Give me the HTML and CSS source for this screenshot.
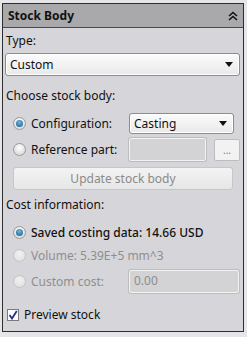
FILE: index.html
```html
<!DOCTYPE html>
<html lang="en">

<head>
    <meta charset="UTF-8">
    <title>Stock Body</title>
    <link rel="stylesheet" href="styles.css">
</head>

<body>
    <div class="panel">
        <div class="header">
            <span class="title">Stock Body</span>
            <svg class="collapse" width="10" height="10" viewBox="0 0 10 10">
                <path d="M1 5 L5 1.5 L9 5 M1 9 L5 5.5 L9 9" fill="none" stroke="#111" stroke-width="1.6"/>
            </svg>
        </div>

        <div class="content">
            <div class="label type-label">Type:</div>
            <div class="select wide">
                <span>Custom</span>
                <span class="arrow"></span>
            </div>

            <div class="label section-label">Choose stock body:</div>

            <div class="row first">
                <span class="radio checked"></span>
                <span class="row-text">Configuration:</span>
                <div class="select small">
                    <span>Casting</span>
                    <span class="arrow"></span>
                </div>
            </div>

            <div class="row">
                <span class="radio"></span>
                <span class="row-text">Reference part:</span>
                <div class="textbox ref"></div>
                <div class="browse">...</div>
            </div>

            <div class="update">Update stock body</div>

            <div class="label cost-label">Cost information:</div>

            <div class="row plain saved">
                <span class="radio checked"></span>
                <span class="row-text">Saved costing data: 14.66 USD</span>
            </div>

            <div class="row plain disabled">
                <span class="radio"></span>
                <span class="row-text">Volume: 5.39E+5 mm^3</span>
            </div>

            <div class="row disabled custom">
                <span class="radio"></span>
                <span class="row-text">Custom cost:</span>
                <div class="textbox cost">0.00</div>
            </div>

            <div class="preview">
                <span class="checkbox">
                    <svg width="10" height="10" viewBox="0 0 10 10">
                        <path d="M1.5 5 L4 8.5 L8.8 1" fill="none" stroke="#1f2f9a" stroke-width="1.8"/>
                    </svg>
                </span>
                <span>Preview stock</span>
            </div>
        </div>
    </div>
</body>

</html>
```

FILE: styles.css
```css
body {
    margin: 0;
    background-color: #e6e6e8;
    font-family: "Noto Sans", "Open Sans", sans-serif;
    font-size: 12px;
    color: #111111;
}

.panel {
    margin: 3px 3px 0 2px;
    height: 329px;
    border: 1px solid #2e2e2e;
    background-color: #d6d6da;
    box-sizing: border-box;
}

.header {
    height: 23px;
    background-color: #a9a9ab;
    border-bottom: 1px solid #4a4a4a;
    display: flex;
    align-items: center;
    justify-content: space-between;
    padding: 0 5px 0 5px;
}

.title {
    font-weight: bold;
    font-size: 12px;
}

.content {
    padding: 0 3px 0 2px;
}

.label {
    height: 16px;
    line-height: 16px;
    padding-left: 1px;
}

.type-label {
    margin-top: 5px;
}

.select {
    height: 23px;
    box-sizing: border-box;
    border: 1px solid #8c8c8c;
    border-radius: 3px;
    background: linear-gradient(#fbfbfb, #e9e9ea);
    display: flex;
    align-items: center;
    justify-content: space-between;
    padding: 0 6px 0 4px;
    box-shadow: inset 0 0 0 1px #ffffff;
}

.wide {
    margin-top: 4px;
}

.arrow {
    width: 0;
    height: 0;
    border-left: 4px solid transparent;
    border-right: 4px solid transparent;
    border-top: 5px solid #111111;
}

.section-label {
    margin-top: 12px;
}

.row {
    display: flex;
    align-items: center;
    padding-left: 8px;
    height: 23px;
    margin-top: 4px;
}

.row.first {
    margin-top: 9px;
    height: 21px;
}

.radio {
    width: 13px;
    height: 13px;
    border-radius: 50%;
    box-sizing: border-box;
    border: 1px solid #9a9a9a;
    background: radial-gradient(circle at 50% 35%, #ffffff, #d0d0d0);
    flex-shrink: 0;
    position: relative;
}

.radio.checked::after {
    content: "";
    position: absolute;
    left: 2px;
    top: 2px;
    width: 7px;
    height: 7px;
    border-radius: 50%;
    background: radial-gradient(circle at 50% 35%, #6fb6e0, #115a88);
}

.row-text {
    margin-left: 5px;
    width: 98px;
    white-space: nowrap;
}

.small {
    width: 105px;
    height: 21px;
}

.textbox {
    height: 23px;
    box-sizing: border-box;
    border: 1px solid #f2f2f2;
    border-radius: 2px;
    background-color: #d3d3d5;
    box-shadow: 0 0 0 1px #bdbdbd;
}

.ref {
    width: 77px;
}

.browse {
    margin-left: 8px;
    width: 26px;
    height: 22px;
    box-sizing: border-box;
    border: 1px solid #bdbdbd;
    border-radius: 2px;
    background-color: #f2f2f3;
    color: #777777;
    font-size: 10px;
    text-align: center;
    line-height: 20px;
}

.update {
    margin: 6px 7px 0 8px;
    height: 23px;
    box-sizing: border-box;
    border: 1px solid #c6c6c6;
    border-radius: 3px;
    background: linear-gradient(#f3f3f4, #e6e6e7);
    color: #8a8a8a;
    text-align: center;
    line-height: 21px;
}

.cost-label {
    margin-top: 7px;
}

.row.plain {
    height: 16px;
}

.row.saved {
    margin-top: 11px;
}

.row.saved .row-text {
    width: auto;
    font-weight: 500;
}

.row.plain.disabled {
    margin-top: 7px;
}

.disabled .radio {
    border-color: #c4c4c4;
    background: radial-gradient(circle at 50% 35%, #f2f2f2, #dcdcdc);
}

.disabled .row-text {
    color: #8e8e8e;
    width: auto;
}

.row.custom {
    margin-top: 7px;
}

.row.custom .row-text {
    width: 98px;
}

.cost {
    width: 110px;
    color: #8e8e8e;
    line-height: 19px;
    padding-left: 4px;
}

.preview {
    display: flex;
    align-items: center;
    margin-top: 13px;
    padding-left: 2px;
}

.checkbox {
    width: 12px;
    height: 12px;
    box-sizing: border-box;
    border: 1px solid #7a7a7a;
    background-color: #ffffff;
    display: flex;
    align-items: center;
    justify-content: center;
    margin-right: 5px;
}
```
